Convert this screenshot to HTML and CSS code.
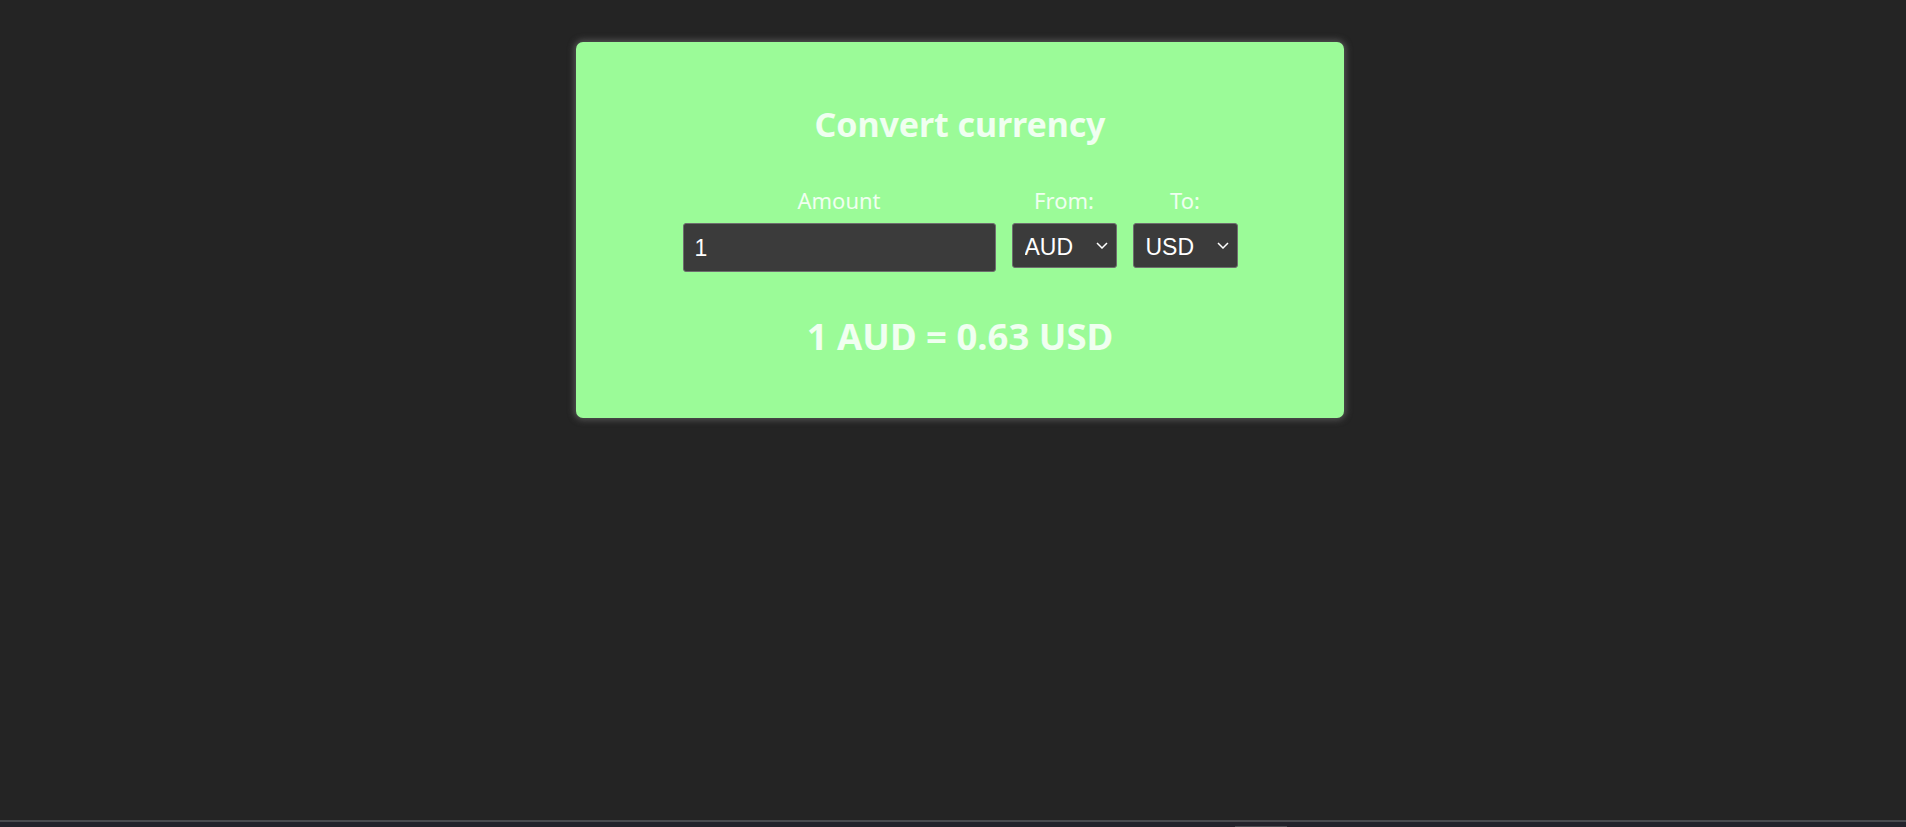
FILE: index.html
```html
<!DOCTYPE html>
<html lang="en">
<head>
<meta charset="utf-8">
<title>Convert currency</title>
<link rel="stylesheet" href="styles.css">
</head>
<body>
<main class="page">
  <section class="card">
    <h1 class="title">Convert currency</h1>
    <div class="fields">
      <label class="field field-amount">
        <span class="field-label">Amount</span>
        <input class="amount-input" type="text" value="1">
      </label>
      <label class="field">
        <span class="field-label">From:</span>
        <select class="currency-select">
          <option selected>AUD</option>
          <option>USD</option>
          <option>EUR</option>
        </select>
      </label>
      <label class="field">
        <span class="field-label">To:</span>
        <select class="currency-select">
          <option selected>USD</option>
          <option>AUD</option>
          <option>EUR</option>
        </select>
      </label>
    </div>
    <h2 class="result">1 AUD = 0.63 USD</h2>
  </section>
</main>
<footer class="bottom-strip"><span class="strip-tab"></span></footer>
</body>
</html>
```
FILE: styles.css
```css
* { box-sizing: border-box; }

html, body {
  margin: 0;
  padding: 0;
}

body {
  background: #242424;
  min-height: 100vh;
  display: flex;
  flex-direction: column;
  font-family: "Noto Sans", "Open Sans", sans-serif;
  color: #f0fff0;
}

.page {
  flex: 1;
  display: flex;
  justify-content: center;
  align-items: flex-start;
  padding-top: 42px;
  padding-left: 14px;
}

.card {
  width: 768px;
  height: 376px;
  background: #9bfb98;
  border-radius: 7px;
  box-shadow: 0 0 6px 2px rgba(96, 96, 96, 0.8);
  display: flex;
  flex-direction: column;
  align-items: center;
  padding-top: 62px;
}

.title {
  margin: 0;
  font-size: 34px;
  font-weight: 700;
  line-height: 1.2;
  letter-spacing: -0.1px;
  color: #f0fff0;
}

.fields {
  margin-top: 42px;
  display: flex;
  gap: 16px;
  align-items: flex-start;
}

.field {
  display: flex;
  flex-direction: column;
  align-items: center;
  gap: 10px;
}

.field-label {
  font-size: 22px;
  line-height: 26px;
  font-weight: 400;
  color: #f0fff0;
}

.amount-input {
  width: 313px;
  height: 49px;
  background: #3b3b3b;
  border: 1px solid #6e6e6e;
  border-radius: 3px;
  color: #ffffff;
  font-family: "Liberation Sans", Arial, sans-serif;
  font-size: 23px;
  padding: 2px 11px 0;
  outline: none;
}

.currency-select {
  appearance: none;
  -webkit-appearance: none;
  width: 105px;
  height: 45px;
  background-color: #3b3b3b;
  background-image: url("data:image/svg+xml;utf8,<svg xmlns='http://www.w3.org/2000/svg' width='12' height='7' viewBox='0 0 12 7'><path d='M1 1l5 5 5-5' fill='none' stroke='white' stroke-width='1.5'/></svg>");
  background-repeat: no-repeat;
  background-position: right 8px center;
  border: 1px solid #6e6e6e;
  border-radius: 3px;
  color: #ffffff;
  font-family: "Liberation Sans", Arial, sans-serif;
  font-size: 23px;
  padding: 3px 0 0 12px;
  outline: none;
}

.result {
  margin: 43px 0 0;
  font-size: 36.5px;
  font-weight: 700;
  line-height: 1.2;
  color: #f0fff0;
}

.bottom-strip {
  height: 7px;
  border-top: 2px solid #4a4a4f;
  background: #23222b;
  display: flex;
  justify-content: flex-start;
  padding-left: 1235px;
  align-items: flex-end;
}

.strip-tab {
  width: 52px;
  height: 1px;
  background: #4a4a50;
}
```
